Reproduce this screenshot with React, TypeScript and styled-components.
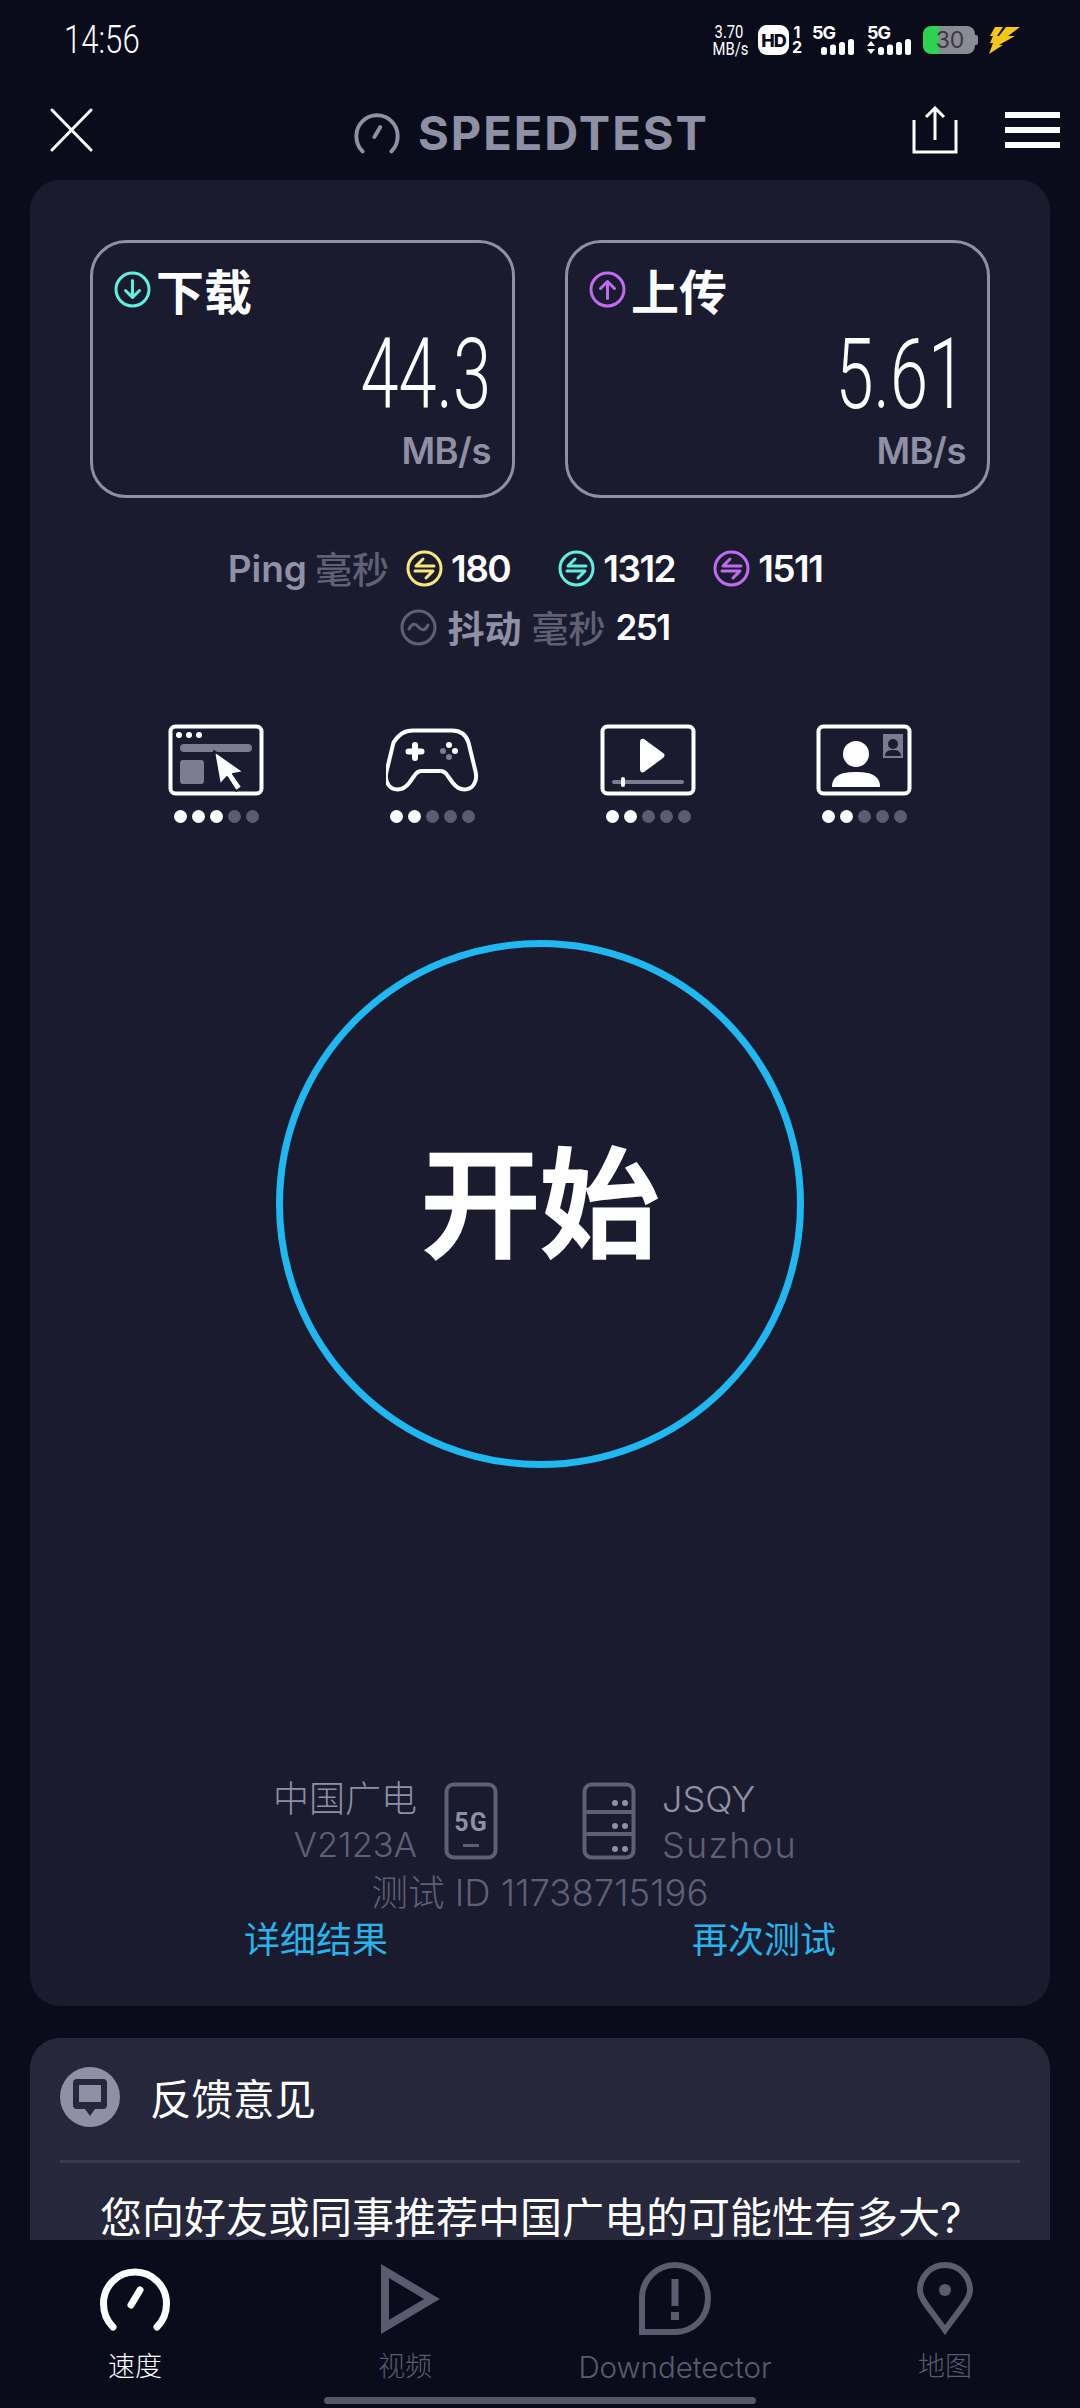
import React from 'react';
import styled, {createGlobalStyle} from 'styled-components';

const sans = `Inter, "Noto Sans CJK SC", sans-serif`;

const GlobalStyle = createGlobalStyle`
  html, body {
    margin: 0;
    padding: 0;
    background: #0a0b1b;
  }
`;

const Screen = styled.div`
  width: 1080px;
  height: 2408px;
  display: flex;
  flex-direction: column;
  overflow: hidden;
  background: #0a0b1b;
  font-family: ${sans};
  color: #fff;
`;

const StatusBar = styled.div`
  height: 80px;
  flex: none;
  display: flex;
  align-items: center;
  justify-content: space-between;
  padding: 0 60px 0 64px;
`;

const Clock = styled.div`
  font-family: Roboto, sans-serif;
  font-size: 38px;
  font-weight: 300;
  transform: scaleX(0.82);
  transform-origin: left center;
`;

const StatusIcons = styled.div`
  display: flex;
  align-items: center;
  height: 36px;
`;

const NetSpeed = styled.div`
  width: 40px;
  font-family: Roboto, sans-serif;
  font-size: 18px;
  line-height: 17px;
  text-align: center;
  transform: scaleX(0.82);
`;

const HdBadge = styled.div`
  width: 31px;
  height: 30px;
  margin-left: 9px;
  border-radius: 9px;
  background: #fff;
  color: #0a0b1b;
  display: flex;
  align-items: center;
  justify-content: center;
  font-size: 18px;
  font-weight: 800;
  letter-spacing: -1px;
`;

const SimDigits = styled.div`
  width: 12px;
  margin-left: 2px;
  font-size: 16px;
  font-weight: 700;
  line-height: 15px;
  text-align: center;
`;

const Signal = styled.div<{$wide?: boolean}>`
  width: ${p => (p.$wide ? 47 : 44)}px;
  margin-left: ${p => (p.$wide ? 11 : 9)}px;
  height: 30px;
  position: relative;
  font-size: 18px;
  font-weight: 700;
  line-height: 15px;
  letter-spacing: -1px;
  svg {
    position: absolute;
    left: 0;
    bottom: 0;
  }
`;

const Battery = styled.div`
  width: 52px;
  height: 28px;
  margin-left: 9px;
  border-radius: 8px;
  background: linear-gradient(90deg, #2dd24f 0 16px, #8b8b93 16px);
  color: #3a3a44;
  display: flex;
  align-items: center;
  justify-content: center;
  font-size: 23px;
  padding-left: 2px;
  box-sizing: border-box;
`;

const BatteryNub = styled.div`
  width: 3px;
  height: 10px;
  background: #8b8b93;
  border-radius: 0 2px 2px 0;
`;

const Bolt = styled.svg`
  margin-left: 9px;
`;

const Header = styled.div`
  height: 100px;
  flex: none;
  display: flex;
  align-items: center;
  position: relative;
  padding: 0 20px 0 50px;
`;

const Logo = styled.div`
  position: absolute;
  left: 353px;
  top: 24px;
  display: flex;
  align-items: center;
  gap: 17px;
  color: #8f90a5;
  font-size: 47px;
  font-weight: 700;
  letter-spacing: 2px;
`;

const HeaderRight = styled.div`
  margin-left: auto;
  display: flex;
  align-items: center;
  gap: 47px;
`;

const Burger = styled.div`
  width: 55px;
  display: flex;
  flex-direction: column;
  gap: 9px;
  i {
    display: block;
    height: 6px;
    background: #fff;
  }
`;

const MainCard = styled.div`
  height: 1826px;
  flex: none;
  margin: 0 30px;
  box-sizing: border-box;
  padding-top: 60px;
  border-radius: 30px;
  background: #1a1b2e;
  display: flex;
  flex-direction: column;
  align-items: center;
`;

const Stats = styled.div`
  width: 900px;
  display: grid;
  grid-template-columns: 1fr 1fr;
  gap: 50px;
`;

const StatBox = styled.div`
  height: 258px;
  box-sizing: border-box;
  border: 3px solid #8f90a5;
  border-radius: 36px;
  padding: 0 21px 0 21px;
  position: relative;
`;

const StatTitle = styled.div`
  height: 66px;
  margin-top: 13px;
  display: flex;
  align-items: center;
  gap: 5px;
  font-size: 48px;
  font-weight: 700;
`;

const StatValue = styled.div`
  text-align: right;
  font-family: Roboto, sans-serif;
  font-weight: 300;
  font-size: 98px;
  line-height: 100px;
  margin-top: 3px;
  transform: scaleX(0.7);
  transform-origin: right center;
`;

const StatUnit = styled.div`
  text-align: right;
  color: #8f90a5;
  font-size: 36.5px;
  font-weight: 600;
  line-height: 44px;
  letter-spacing: -0.5px;
  margin-top: 4px;
`;

const PingRow = styled.div`
  margin-top: 48px;
  padding-right: 30px;
  height: 44px;
  display: flex;
  align-items: center;
  font-size: 37px;
  font-weight: 600;
`;

const JitterRow = styled(PingRow)`
  margin-top: 15px;
  padding-right: 10px;
`;

const Muted = styled.span<{$gap?: number; $before?: number; $strong?: boolean}>`
  color: ${p => (p.$strong ? '#8f90a5' : '#5f6075')};
  font-weight: ${p => (p.$strong ? 600 : 500)};
  margin-left: ${p => p.$before ?? 0}px;
  margin-right: ${p => p.$gap ?? 0}px;
`;

const PingValue = styled.span<{$gap?: number; $tight?: boolean}>`
  margin-left: 8px;
  margin-right: ${p => p.$gap ?? 0}px;
  letter-spacing: -1.5px;
  font-size: ${p => (p.$tight ? 35 : 37)}px;
`;

const QualityRow = styled.div`
  margin-top: 75px;
  width: 864px;
  display: grid;
  grid-template-columns: repeat(4, 1fr);
`;

const QualityItem = styled.div`
  display: flex;
  flex-direction: column;
  align-items: center;
  gap: 14px;
`;

const QualityIconSlot = styled.div`
  height: 72px;
  display: flex;
  align-items: center;
`;

const Dots = styled.div`
  display: flex;
  gap: 5px;
`;

const Dot = styled.span<{$on: boolean}>`
  width: 13px;
  height: 13px;
  border-radius: 50%;
  background: ${p => (p.$on ? '#fff' : '#5b5c70')};
`;

const StartButton = styled.div`
  margin-top: 117px;
  width: 528px;
  height: 528px;
  box-sizing: border-box;
  padding-bottom: 16px;
  border: 7px solid #1fb8f0;
  border-radius: 50%;
  display: flex;
  align-items: center;
  justify-content: center;
  font-size: 119px;
  font-weight: 500;
  -webkit-text-stroke: 3px #fff;
`;

const InfoGrid = styled.div`
  margin-top: 314px;
  width: 100%;
  display: grid;
  grid-template-columns: 1fr 1fr;
  gap: 84px;
`;

const InfoGroup = styled.div<{$left?: boolean}>`
  display: flex;
  align-items: center;
  justify-content: ${p => (p.$left ? 'flex-end' : 'flex-start')};
  gap: ${p => (p.$left ? 27 : 26)}px;
  height: 78px;
`;

const InfoText = styled.div<{$left?: boolean}>`
  text-align: ${p => (p.$left ? 'right' : 'left')};
  padding-top: 2px;
`;

const InfoMain = styled.div`
  color: #8f90a5;
  font-size: 36px;
  font-weight: 300;
  line-height: 46px;
`;

const InfoSub = styled.div<{$wide?: boolean}>`
  color: #5f6075;
  font-size: ${p => (p.$wide ? 36 : 34.5)}px;
  font-weight: 300;
  line-height: 46px;
  letter-spacing: ${p => (p.$wide ? 1.3 : 0)}px;
`;

const TestId = styled.div`
  color: #5f6075;
  font-size: 36.5px;
  font-weight: 300;
  line-height: 44px;
  margin-top: 11px;
`;

const Links = styled.div`
  width: 100%;
  box-sizing: border-box;
  padding: 0 214px;
  margin-top: 3px;
  display: flex;
  justify-content: space-between;
  color: #28b4ea;
  font-size: 36px;
  line-height: 44px;
`;

const FeedbackCard = styled.div`
  flex: none;
  height: 202px;
  margin: 32px 30px 0;
  box-sizing: border-box;
  padding: 29px 30px 0;
  border-radius: 30px 30px 0 0;
  background: #26273a;
  overflow: hidden;
`;

const FeedbackHead = styled.div`
  display: flex;
  align-items: center;
  gap: 30px;
  font-size: 41.5px;
  height: 60px;
`;

const FeedbackIcon = styled.div`
  width: 60px;
  height: 60px;
  border-radius: 50%;
  background: #8f90a5;
  display: flex;
  align-items: center;
  justify-content: center;
`;

const Divider = styled.div`
  height: 3px;
  margin-top: 33px;
  background: #3a3b4e;
`;

const Question = styled.div`
  margin: 27px 0 0 40px;
  font-size: 42px;
  line-height: 56px;
  white-space: nowrap;
`;

const BottomNav = styled.div`
  flex: none;
  height: 168px;
  position: relative;
  display: grid;
  grid-template-columns: repeat(4, 270px);
`;

const NavItem = styled.div<{$active?: boolean}>`
  display: flex;
  flex-direction: column;
  align-items: center;
  padding-top: 22px;
  color: ${p => (p.$active ? '#fff' : '#5a5b6f')};
  font-size: 27px;
  font-weight: 300;
  svg {
    height: 74px;
  }
`;

const PlayGlyph = styled.svg`
  margin-left: 12px;
`;

const NavLabel = styled.div<{$latin?: boolean}>`
  margin-top: 14px;
  line-height: 34px;
  font-size: ${p => (p.$latin ? 29.5 : 27)}px;
`;

const HomeBar = styled.div`
  position: absolute;
  left: 324px;
  bottom: 4px;
  width: 432px;
  height: 7px;
  border-radius: 4px;
  background: #55566a;
`;

const CircleIcon: React.FC<{color: string; kind: 'down' | 'up' | 'ping' | 'wave'}> = ({color, kind}) => (
  <svg width="37" height="37" viewBox="0 0 37 37" fill="none" stroke={color} strokeWidth="3" strokeLinecap="round" strokeLinejoin="round">
    <circle cx="18.5" cy="18.5" r="16.5" />
    {kind === 'down' && <path d="M18.5 9.500v17M11.500 19.500l7 7 7-7" />}
    {kind === 'up' && <path d="M18.5 27.500v-17M11.500 17.500l7-7 7 7" />}
    {kind === 'ping' && <path d="M28 16H10l7-7M9 21h18l-7 7" />}
    {kind === 'wave' && <path d="M9 20c3-6 6-6 9.500-2s6.500 4 9.500-2" />}
  </svg>
);

const Signals: React.FC<{arrows?: boolean}> = ({arrows}) => {
  const x0 = arrows ? 11 : 9;
  return (
    <svg width="47" height="16" viewBox="0 0 47 16" fill="#fff">
      {arrows && <path d="M0 7l4-5 4 5zM0 10h8l-4 5z" />}
      <rect x={x0} y="8" width="6" height="8" rx="2.500" />
      <rect x={x0 + 9} y="5.500" width="6" height="10.500" rx="2.500" />
      <rect x={x0 + 18} y="3" width="6" height="13" rx="2.500" />
      <rect x={x0 + 27} y="0" width="6" height="16" rx="2.500" />
    </svg>
  );
};

const GaugeMark: React.FC<{size: number; height: number; stroke: number; color: string}> = ({size, height, stroke, color}) => (
  <svg width={size} height={height} viewBox="0 0 70 64" fill="none" stroke={color} strokeLinecap="round">
    <path d="M13 60C6 53 3.500 45 3.500 36.500a31.500 31.500 0 0 1 63 0c0 8.500-2.500 16.500-9.500 23.500" strokeWidth={stroke} />
    <path d="M31 38l9-15" strokeWidth={stroke} />
  </svg>
);

const BrowserIcon = () => (
  <svg width="96" height="72" viewBox="0 0 96 72" fill="none">
    <rect x="2.500" y="2.500" width="91" height="67" rx="5" stroke="#fff" strokeWidth="4" />
    <circle cx="11" cy="11" r="3" fill="#fff" />
    <circle cx="21" cy="11" r="3" fill="#fff" />
    <circle cx="31" cy="11" r="3" fill="#fff" />
    <rect x="12" y="20" width="72" height="8" rx="4" fill="#7b7c90" />
    <rect x="12" y="36" width="24" height="24" rx="3" fill="#7b7c90" />
    <path d="M46 27l30 21-11 2 9 13-6 4-9-14-7 8z" fill="#fff" stroke="#1a1b2e" strokeWidth="2" strokeLinejoin="round" />
  </svg>
);

const GameIcon = () => (
  <svg width="93" height="64" viewBox="0 0 93 64" fill="none">
    <path d="M27 2.500h39c9 0 14 4 16.500 12l7 29c2.500 10-3 18-11 18-6 0-9-3-12-7l-5-7c-2-3-4-4.500-7-4.500H35.500c-3 0-5 1.500-7 4.500l-5 7c-3 4-6 7-12 7-8 0-13.500-8-11-18l7-29C13 6.500 18 2.500 27 2.500z" stroke="#fff" strokeWidth="4" />
    <path d="M29 17v13M22.500 23.500h13" stroke="#fff" strokeWidth="6" strokeLinecap="round" />
    <circle cx="63" cy="17" r="3" fill="#fff" />
    <circle cx="69" cy="23" r="3" fill="#fff" />
    <circle cx="57" cy="23" r="3" fill="#7b7c90" />
    <circle cx="63" cy="29" r="3" fill="#7b7c90" />
  </svg>
);

const VideoIcon = () => (
  <svg width="96" height="72" viewBox="0 0 96 72" fill="none">
    <rect x="2.500" y="2.500" width="91" height="67" rx="5" stroke="#fff" strokeWidth="4" />
    <path d="M40 18c0-3 2-4 4-3l19 14c2 1 2 3 0 5L44 48c-2 1-4 0-4-3z" fill="#fff" />
    <rect x="12" y="56" width="72" height="4" rx="2" fill="#7b7c90" />
    <rect x="21" y="53" width="4" height="10" rx="2" fill="#fff" />
  </svg>
);

const ContactIcon = () => (
  <svg width="96" height="72" viewBox="0 0 96 72" fill="none">
    <rect x="2.500" y="2.500" width="91" height="67" rx="5" stroke="#fff" strokeWidth="4" />
    <ellipse cx="40" cy="30" rx="13" ry="13" fill="#fff" />
    <path d="M16 63c0-12 10-15 24-15s24 3 24 15z" fill="#fff" />
    <rect x="67" y="10" width="20" height="24" fill="#7b7c90" />
    <circle cx="77" cy="20" r="5" fill="#1a1b2e" />
    <path d="M69 32c0-5 4-6 8-6s8 1 8 6z" fill="#1a1b2e" />
  </svg>
);

const PhoneIcon = () => (
  <svg width="54" height="78" viewBox="0 0 54 78" fill="none">
    <rect x="2.500" y="2.500" width="49" height="73" rx="7" stroke="#5f6075" strokeWidth="4" />
    <text x="27" y="49" textAnchor="middle" fontFamily="Roboto, sans-serif" fontSize="25" fontWeight="700" fill="#8f90a5" letterSpacing="1">5G</text>
    <rect x="19" y="62" width="16" height="3" fill="#5f6075" />
  </svg>
);

const ServerIcon = () => (
  <svg width="54" height="78" viewBox="0 0 54 78" fill="none">
    <rect x="2.500" y="2.500" width="49" height="73" rx="7" stroke="#5f6075" strokeWidth="4" />
    <path d="M3 30h48M3 52h48" stroke="#5f6075" strokeWidth="4" />
    {[21, 44, 67].map(y => (
      <g key={y} fill="#8f90a5">
        <circle cx="33" cy={y} r="3" />
        <circle cx="43" cy={y} r="3" />
      </g>
    ))}
  </svg>
);

const qualities = [
  {icon: <BrowserIcon />, level: 3},
  {icon: <GameIcon />, level: 2},
  {icon: <VideoIcon />, level: 2},
  {icon: <ContactIcon />, level: 2},
];

export default function App() {
  return (
    <Screen>
      <GlobalStyle />
      <StatusBar>
        <Clock>14:56</Clock>
        <StatusIcons>
          <NetSpeed>3.70<br />MB/s</NetSpeed>
          <HdBadge>HD</HdBadge>
          <SimDigits>1<br />2</SimDigits>
          <Signal>5G<Signals /></Signal>
          <Signal $wide>5G<Signals arrows /></Signal>
          <Battery>30</Battery>
          <BatteryNub />
          <Bolt width="33" height="28" viewBox="0 0 33 28" fill="#f7c518">
            <path d="M8 1h8L10 10h2l7-9h14L21 10h7L12 19h4L2 28l4-11H3l3-7H3z" />
          </Bolt>
        </StatusIcons>
      </StatusBar>

      <Header>
        <svg width="43" height="44" viewBox="0 0 43 44" stroke="#fff" strokeWidth="3" strokeLinecap="round">
          <path d="M2 2l39 40M41 2L2 42" />
        </svg>
        <Logo>
          <GaugeMark size={48} height={42} stroke={6} color="#8f90a5" />
          SPEEDTEST
        </Logo>
        <HeaderRight>
          <svg width="46" height="48" viewBox="0 0 46 48" fill="none" stroke="#fff" strokeWidth="3">
            <path d="M2 14v32h42V14M23 34V3M14 11l9-9 9 9" />
          </svg>
          <Burger><i /><i /><i /></Burger>
        </HeaderRight>
      </Header>

      <MainCard>
        <Stats>
          <StatBox>
            <StatTitle><CircleIcon color="#5ef0e0" kind="down" />下载</StatTitle>
            <StatValue>44.3</StatValue>
            <StatUnit>MB/s</StatUnit>
          </StatBox>
          <StatBox>
            <StatTitle><CircleIcon color="#c06cf0" kind="up" />上传</StatTitle>
            <StatValue>5.61</StatValue>
            <StatUnit>MB/s</StatUnit>
          </StatBox>
        </Stats>

        <PingRow>
          <Muted $strong $gap={8}>Ping</Muted>
          <Muted $gap={17}>毫秒</Muted>
          <CircleIcon color="#f8e77a" kind="ping" />
          <PingValue $gap={48}>180</PingValue>
          <CircleIcon color="#5ef0e0" kind="ping" />
          <PingValue $gap={38}>1312</PingValue>
          <CircleIcon color="#c06cf0" kind="ping" />
          <PingValue>1511</PingValue>
        </PingRow>
        <JitterRow>
          <CircleIcon color="#5f6075" kind="wave" />
          <Muted $strong $before={10} $gap={10}>抖动</Muted>
          <Muted $gap={2}>毫秒</Muted>
          <PingValue $tight>251</PingValue>
        </JitterRow>

        <QualityRow>
          {qualities.map((q, i) => (
            <QualityItem key={i}>
              <QualityIconSlot>{q.icon}</QualityIconSlot>
              <Dots>
                {[0, 1, 2, 3, 4].map(d => <Dot key={d} $on={d < q.level} />)}
              </Dots>
            </QualityItem>
          ))}
        </QualityRow>

        <StartButton>开始</StartButton>

        <InfoGrid>
          <InfoGroup $left>
            <InfoText $left>
              <InfoMain>中国广电</InfoMain>
              <InfoSub>V2123A</InfoSub>
            </InfoText>
            <PhoneIcon />
          </InfoGroup>
          <InfoGroup>
            <ServerIcon />
            <InfoText>
              <InfoMain>JSQY</InfoMain>
              <InfoSub $wide>Suzhou</InfoSub>
            </InfoText>
          </InfoGroup>
        </InfoGrid>
        <TestId>测试 ID 11738715196</TestId>
        <Links>
          <span>详细结果</span>
          <span>再次测试</span>
        </Links>
      </MainCard>

      <FeedbackCard>
        <FeedbackHead>
          <FeedbackIcon>
            <svg width="36" height="40" viewBox="0 0 36 40">
              <path d="M5 2h26a4 4 0 0 1 4 4v22a4 4 0 0 1-4 4h-8l-5 7-5-7H5a4 4 0 0 1-4-4V6a4 4 0 0 1 4-4z" fill="#26273a" />
              <rect x="7" y="8" width="22" height="17" fill="#8f90a5" />
            </svg>
          </FeedbackIcon>
          反馈意见
        </FeedbackHead>
        <Divider />
        <Question>您向好友或同事推荐中国广电的可能性有多大?</Question>
      </FeedbackCard>

      <BottomNav>
        <NavItem $active>
          <GaugeMark size={70} height={64} stroke={7} color="#fff" />
          <NavLabel>速度</NavLabel>
        </NavItem>
        <NavItem>
          <PlayGlyph width="62" height="74" viewBox="0 0 62 74" fill="none" stroke="currentColor" strokeWidth="8">
            <path d="M5 9v56l47-28z" />
          </PlayGlyph>
          <NavLabel>视频</NavLabel>
        </NavItem>
        <NavItem>
          <svg width="72" height="74" viewBox="0 0 72 74" fill="none" stroke="currentColor">
            <path d="M3 70V36a33 33 0 0 1 66 0c0 20-15 34-33 34z" strokeWidth="6" />
            <path d="M36 17v27" strokeWidth="7" />
            <path d="M36 50v8" strokeWidth="8" />
          </svg>
          <NavLabel $latin>Downdetector</NavLabel>
        </NavItem>
        <NavItem>
          <svg width="56" height="74" viewBox="0 0 56 74" fill="none" stroke="currentColor" strokeWidth="6">
            <path d="M28 68C13 47 3 37 3 28a25 25 0 0 1 50 0c0 9-10 19-25 40z" />
            <circle cx="28" cy="28" r="6" fill="currentColor" stroke="none" />
          </svg>
          <NavLabel>地图</NavLabel>
        </NavItem>
        <HomeBar />
      </BottomNav>
    </Screen>
  );
}
